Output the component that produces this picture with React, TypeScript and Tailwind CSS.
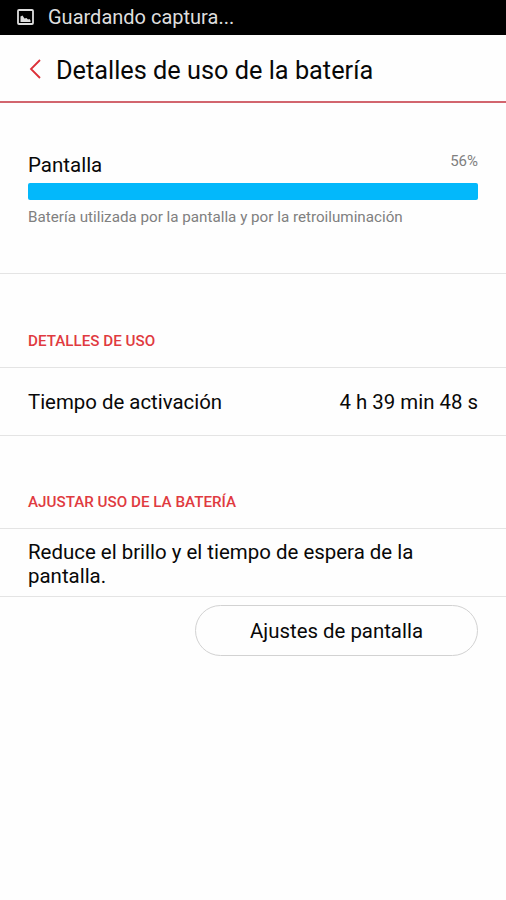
import React from 'react';

interface SectionTitleProps {
  children: React.ReactNode;
}

function StatusBar() {
  return (
    <div className="flex h-[35px] items-center bg-black pb-[2px] pl-[17px] text-[#dedede]">
      <svg width="17" height="16" viewBox="0 0 17 16" fill="none">
        <rect x="1" y="1" width="15" height="14" rx="1" stroke="currentColor" strokeWidth="1.8" />
        <path d="M3.5 13V7.5l2-1 2 3 2-.5 1.5 1.5 1.500-.5 1 1.500V13z" fill="currentColor" />
      </svg>
      <span className="ml-[14px] text-[20px] leading-[24px]">Guardando captura...</span>
    </div>
  );
}

function Header() {
  return (
    <header className="flex h-[68px] items-center border-b-2 border-[#d2656e] pt-[3px] pl-[29px]">
      <button aria-label="Atrás" className="pb-[2px]">
        <svg width="13" height="20" viewBox="0 0 13 20" fill="none">
          <path d="M11 1L2 10l9 9" stroke="#dc3038" strokeWidth="1.8" />
        </svg>
      </button>
      <h1 className="mt-[2px] ml-[14px] text-[25.3px] leading-[30px]">Detalles de uso de la batería</h1>
    </header>
  );
}

function SectionTitle({ children }: SectionTitleProps) {
  return (
    <h2 className="flex h-[93px] items-end border-b border-[#e4e4e4] px-7 pb-[16px] text-[15.2px] leading-[20px] font-medium text-[#e03a40]">
      {children}
    </h2>
  );
}

export default function App() {
  return (
    <div className="flex min-h-[900px] w-full flex-col bg-[#fefefe] font-['Roboto',sans-serif] text-[#080808]">
      <StatusBar />
      <Header />

      <section className="h-[171px] border-b border-[#e4e4e4] px-7 pt-[50px]">
        <div className="flex h-[30px] justify-between">
          <span className="text-[20.5px] leading-[24px]">Pantalla</span>
          <span className="text-[15px] leading-[17px] text-[#808080]">56%</span>
        </div>
        <div className="h-[17px] rounded-[2px] bg-[#03b8fb]" />
        <p className="mt-[7px] text-[15.2px] leading-[20px] text-[#808080]">
          Batería utilizada por la pantalla y por la retroiluminación
        </p>
      </section>

      <div className="pt-px">
        <SectionTitle>DETALLES DE USO</SectionTitle>
        <div className="flex h-[68px] items-center justify-between border-b border-[#e4e4e4] px-7 pt-[2px] text-[20.4px]">
          <span>Tiempo de activación</span>
          <span>4 h 39 min 48 s</span>
        </div>
      </div>

      <SectionTitle>AJUSTAR USO DE LA BATERÍA</SectionTitle>
      <p className="h-[68px] border-b border-[#e4e4e4] px-7 pt-[11px] text-[20.45px] leading-[24px]">
        Reduce el brillo y el tiempo de espera de la pantalla.
      </p>

      <div className="flex justify-end px-7 pt-2">
        <button className="h-[51px] w-[283px] rounded-full border border-[#d2d2d2] pt-[2px] text-[20.4px]">
          Ajustes de pantalla
        </button>
      </div>
    </div>
  );
}
